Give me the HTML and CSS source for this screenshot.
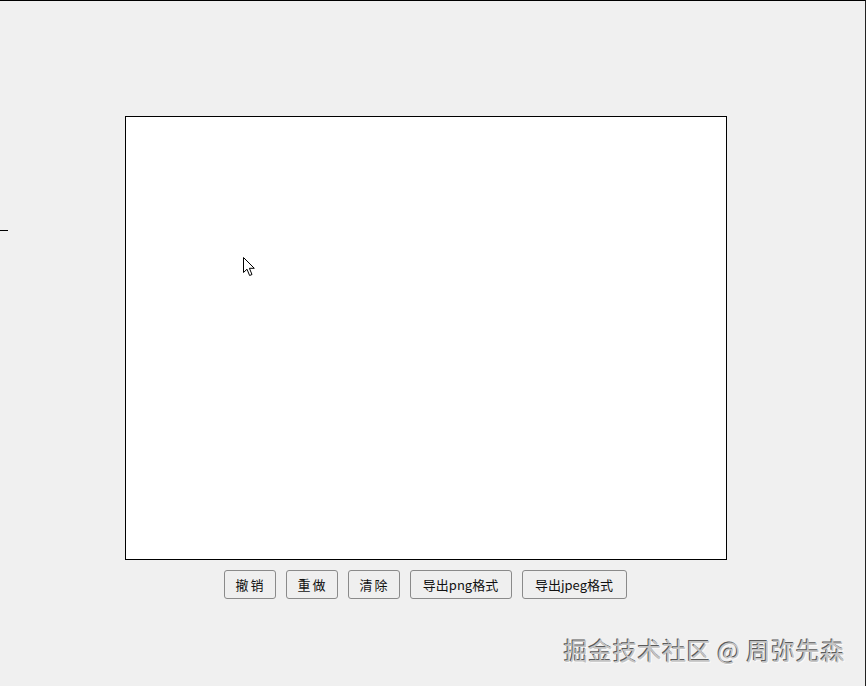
FILE: index.html
```html
<!DOCTYPE html>
<html lang="zh">
<head>
<meta charset="utf-8">
<title>画板</title>
<link rel="stylesheet" href="styles.css">
</head>
<body>
<div class="page">
  <div class="tick"></div>
  <div class="board">
    <div class="canvas">
      <svg class="cursor" width="14" height="21" viewBox="0 0 14 21">
        <path d="M0.5 0.5 L0.5 15.5 L4 12.2 L6.6 18.5 L9 17.5 L6.4 11.3 L11.3 11.3 Z" fill="#fff" stroke="#000" stroke-width="1" stroke-linejoin="miter"/>
      </svg>
    </div>
    <div class="toolbar">
      <button class="btn btn-sm">撤销</button>
      <button class="btn btn-sm">重做</button>
      <button class="btn btn-sm">清除</button>
      <button class="btn btn-png">导出png格式</button>
      <button class="btn btn-jpeg">导出jpeg格式</button>
    </div>
  </div>
  <div class="watermark">掘金技术社区 @ 周弥先森</div>
</div>
</body>
</html>
```
FILE: styles.css
```css
html, body {
  margin: 0;
  padding: 0;
  background: #f0f0f0;
}
.page {
  position: relative;
  width: 866px;
  height: 686px;
  box-sizing: border-box;
  border-top: 1px solid #000;
  border-right: 1px solid #222;
  background: #f0f0f0;
  padding: 115px 0 0 125px;
  font-family: "Noto Sans CJK SC", "Noto Sans", sans-serif;
}
.tick {
  position: absolute;
  left: 0;
  top: 229px;
  width: 8px;
  height: 1px;
  background: #000;
}
.board {
  display: flex;
  flex-direction: column;
  width: 602px;
}
.canvas {
  position: relative;
  width: 600px;
  height: 442px;
  border: 1px solid #000;
  background: #fff;
}
.cursor {
  position: absolute;
  left: 117px;
  top: 140px;
}
.toolbar {
  display: flex;
  justify-content: center;
  gap: 10px;
  margin-top: 10px;
  padding-right: 2px;
}
.btn {
  box-sizing: border-box;
  height: 29px;
  padding: 0;
  border: 1px solid #8a8a8a;
  border-radius: 3px;
  background: #efefef;
  color: #111;
  font-family: "Noto Sans CJK SC", "Noto Sans", sans-serif;
  font-size: 13px;
  font-weight: 400;
  line-height: 27px;
  text-align: center;
}
.btn-sm {
  width: 52px;
  letter-spacing: 2px;
  text-indent: 2px;
}
.btn-png {
  width: 102px;
}
.btn-jpeg {
  width: 105px;
}
.watermark {
  position: absolute;
  right: 20px;
  top: 633px;
  font-size: 24px;
  line-height: 32px;
  color: #c4c4c4;
  text-shadow: -1px -1px 0 #5a5a5a, 1px 1px 0 #fafafa;
  letter-spacing: 0.6px;
}
```
